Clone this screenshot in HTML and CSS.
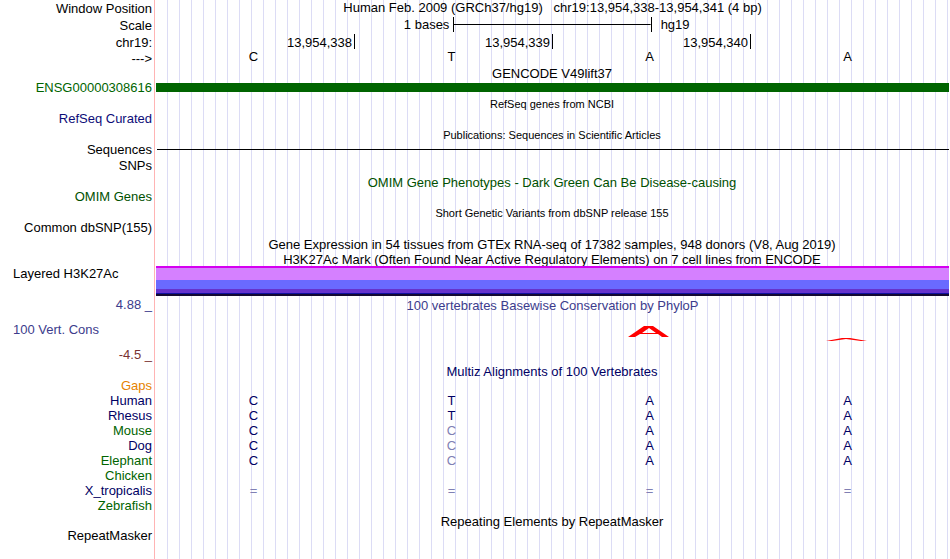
FILE: index.html
```html
<!DOCTYPE html>
<html lang="en">
<head>
    <meta charset="UTF-8">
    <meta name="viewport" content="width=device-width, initial-scale=1.0">
    <title>Human chr19:13,954,338-13,954,341</title>
    <link rel="stylesheet" href="styles.css">
</head>
<body>
    <main class="browser">
        <!-- position, scale and ruler -->
        <div class="row tall">
            <div class="label">Window Position</div>
            <h1 class="title position">Human Feb. 2009 (GRCh37/hg19) &nbsp; chr19:13,954,338-13,954,341 (4 bp)</h1>
        </div>
        <div class="row tall">
            <div class="label">Scale</div>
            <div class="scale">
                <span class="scale-size">1 bases</span>
                <span class="scale-bar"></span>
                <span class="scale-db">hg19</span>
            </div>
        </div>
        <div class="row tall">
            <div class="label">chr19:</div>
            <div class="ruler">
                <span>13,954,338</span>
                <span>13,954,339</span>
                <span>13,954,340</span>
            </div>
        </div>
        <div class="row">
            <div class="label">---&gt;</div>
            <div class="bases">
                <span>C</span>
                <span>T</span>
                <span>A</span>
                <span>A</span>
            </div>
        </div>

        <section>
            <h2 class="title">GENCODE V49lift37</h2>
            <div class="row track">
                <div class="label gene">ENSG00000308616</div>
                <div class="gene-bar"></div>
            </div>
        </section>

        <section>
            <h2 class="title small">RefSeq genes from NCBI</h2>
            <div class="row track">
                <div class="label refseq">RefSeq Curated</div>
            </div>
        </section>

        <section>
            <h2 class="title small">Publications: Sequences in Scientific Articles</h2>
            <div class="row track">
                <div class="label">Sequences</div>
                <div class="seq-line"></div>
            </div>
            <div class="row snps">
                <div class="label">SNPs</div>
            </div>
        </section>

        <section>
            <h2 class="title high omim">OMIM Gene Phenotypes - Dark Green Can Be Disease-causing</h2>
            <div class="row track">
                <div class="label omim">OMIM Genes</div>
            </div>
        </section>

        <section>
            <h2 class="title small">Short Genetic Variants from dbSNP release 155</h2>
            <div class="row track">
                <div class="label">Common dbSNP(155)</div>
            </div>
        </section>

        <section>
            <h2 class="title high">Gene Expression in 54 tissues from GTEx RNA-seq of 17382 samples, 948 donors (V8, Aug 2019)</h2>
        </section>

        <section>
            <h2 class="title tight">H3K27Ac Mark (Often Found Near Active Regulatory Elements) on 7 cell lines from ENCODE</h2>
            <div class="row histone">
                <div class="label left">Layered H3K27Ac</div>
                <div class="layers">
                    <div class="layer magenta"></div>
                    <div class="layer violet"></div>
                    <div class="layer blue"></div>
                    <div class="layer purple"></div>
                    <div class="layer navy"></div>
                    <div class="layer black"></div>
                </div>
            </div>
        </section>

        <section class="row cons">
            <div class="cons-labels">
                <div class="label phylop">4.88 _</div>
                <div class="label left phylop">100 Vert. Cons</div>
                <div class="label negative">-4.5 _</div>
            </div>
            <div class="cons-plot">
                <h2 class="title phylop">100 vertebrates Basewise Conservation by PhyloP</h2>
                <div class="wiggle">
                    <span></span>
                    <span></span>
                    <svg width="42" height="18" viewBox="0 0 42 18">
                        <path fill="#f00" fill-rule="evenodd" d="M0 11 L16 0 H25 L41 11 H34 L30 8 H12 L7 11 Z M14 7 H28 L21 2 Z"/>
                    </svg>
                    <svg width="42" height="18" viewBox="0 0 42 18">
                        <path fill="#f00" d="M0 15 L16 12 H24 L41 15 H35 L20 13 L6 15 Z"/>
                    </svg>
                </div>
            </div>
        </section>

        <section>
            <h2 class="title tight multiz">Multiz Alignments of 100 Vertebrates</h2>
            <table class="alignment">
                <tr><th class="gaps">Gaps</th><td></td><td></td><td></td><td></td></tr>
                <tr><th>Human</th><td>C</td><td>T</td><td>A</td><td>A</td></tr>
                <tr><th>Rhesus</th><td>C</td><td>T</td><td>A</td><td>A</td></tr>
                <tr><th class="alt">Mouse</th><td>C</td><td class="diff">C</td><td>A</td><td>A</td></tr>
                <tr><th>Dog</th><td>C</td><td class="diff">C</td><td>A</td><td>A</td></tr>
                <tr><th class="alt">Elephant</th><td>C</td><td class="diff">C</td><td>A</td><td>A</td></tr>
                <tr><th class="alt">Chicken</th><td></td><td></td><td></td><td></td></tr>
                <tr class="unaligned"><th>X_tropicalis</th><td>=</td><td>=</td><td>=</td><td>=</td></tr>
                <tr><th class="alt">Zebrafish</th><td></td><td></td><td></td><td></td></tr>
            </table>
        </section>

        <section>
            <h2 class="title high">Repeating Elements by RepeatMasker</h2>
            <div class="row track">
                <div class="label">RepeatMasker</div>
            </div>
        </section>
    </main>
</body>
</html>
```

FILE: styles.css
```css
* {
    box-sizing: border-box;
}

body {
    margin: 0;
    background-color: white;
    font-family: "Liberation Sans", Helvetica, Arial, sans-serif;
    font-size: 13px;
    line-height: 15px;
    color: black;
}

/* red divider at the label edge, then a guide line every 12px */
.browser {
    min-height: 100vh;
    padding-right: 1px;
    background-image:
        linear-gradient(to right, white 154px, #ffb4b4 154px, #ffb4b4 155px, white 155px, white 156px, transparent 156px),
        repeating-linear-gradient(to right, transparent 0, transparent 11px, #dcdcf5 11px, #dcdcf5 12px);
}

/* rows */
.row {
    display: grid;
    grid-template-columns: 156px 1fr;
    min-height: 15px;
}

.tall {
    min-height: 17px;
}

.snps {
    min-height: 16px;
}

.label {
    padding-right: 4px;
    text-align: right;
    white-space: nowrap;
}

.tall .label {
    padding-top: 1px;
}

.track .label {
    line-height: 13px;
}

.left {
    padding-left: 13px;
    text-align: left;
}

.title {
    margin: 0 0 0 155px;
    font-size: 13px;
    font-weight: normal;
    text-align: center;
    white-space: nowrap;
}

.row .title {
    margin-left: 0;
}

.small {
    font-size: 11px;
    line-height: 16px;
}

.high {
    height: 16px;
    padding-top: 1px;
    line-height: 16px;
}

.tight {
    height: 14px;
}

/* scale and ruler */
.scale {
    display: grid;
    grid-template-columns: 3fr 2fr 3fr;
}

.scale-size {
    padding-right: 4px;
    text-align: right;
}

.scale-bar {
    height: 15px;
    border-left: 1px solid black;
    border-right: 1px solid black;
    background: linear-gradient(black, black) center / 100% 1px no-repeat;
}

.scale-db {
    padding-left: 9px;
}

.ruler,
.bases {
    display: grid;
    grid-template-columns: repeat(4, 1fr);
    padding-left: 1px;
}

.ruler span {
    height: 15px;
    padding-right: 2px;
    border-right: 1px solid black;
    line-height: 17px;
    text-align: right;
}

.bases span {
    padding-right: 5px;
    line-height: 11px;
    text-align: center;
}

/* tracks */
.gene-bar {
    height: 9px;
    margin-top: 2px;
    background-color: #006400;
}

.gene {
    color: #006400;
}

.refseq {
    color: #0c0c78;
}

.omim {
    color: #005000;
}

.seq-line {
    height: 1px;
    margin: 6px 0 0 1px;
    background-color: black;
}

.histone {
    height: 30px;
}

.magenta {
    height: 2px;
    background-color: #d400f0;
}

.violet {
    height: 12px;
    background-color: #d580ff;
}

.blue {
    height: 9px;
    background-color: #6a6aff;
}

.purple {
    height: 4px;
    background-color: #6633cc;
}

.navy {
    height: 1px;
    background-color: #1010a0;
}

.black {
    height: 2px;
    background-color: #140a32;
}

/* conservation */
.cons {
    margin: 1px 0 2px;
}

.cons-labels {
    display: flex;
    flex-direction: column;
    gap: 10px;
}

.cons-plot {
    padding-top: 1px;
}

.phylop {
    color: #3c3c8c;
}

.negative {
    color: #783232;
}

.wiggle {
    display: grid;
    grid-template-columns: repeat(4, 1fr);
    padding: 13px 0 0 1px;
    justify-items: center;
}

.wiggle svg {
    margin-right: 6px;
}

/* alignment */
.multiz {
    color: #000064;
}

.alignment {
    width: 100%;
    table-layout: fixed;
    border-collapse: collapse;
    color: #000064;
}

.alignment th,
.alignment td {
    height: 15px;
    padding: 0 5px 0 0;
    font-weight: normal;
    text-align: center;
}

.alignment th {
    width: 157px;
    text-align: right;
}

.alignment .gaps {
    color: #e68200;
}

.alignment .alt {
    color: #006400;
}

.alignment .diff,
.unaligned td {
    color: #8080b4;
}
```
